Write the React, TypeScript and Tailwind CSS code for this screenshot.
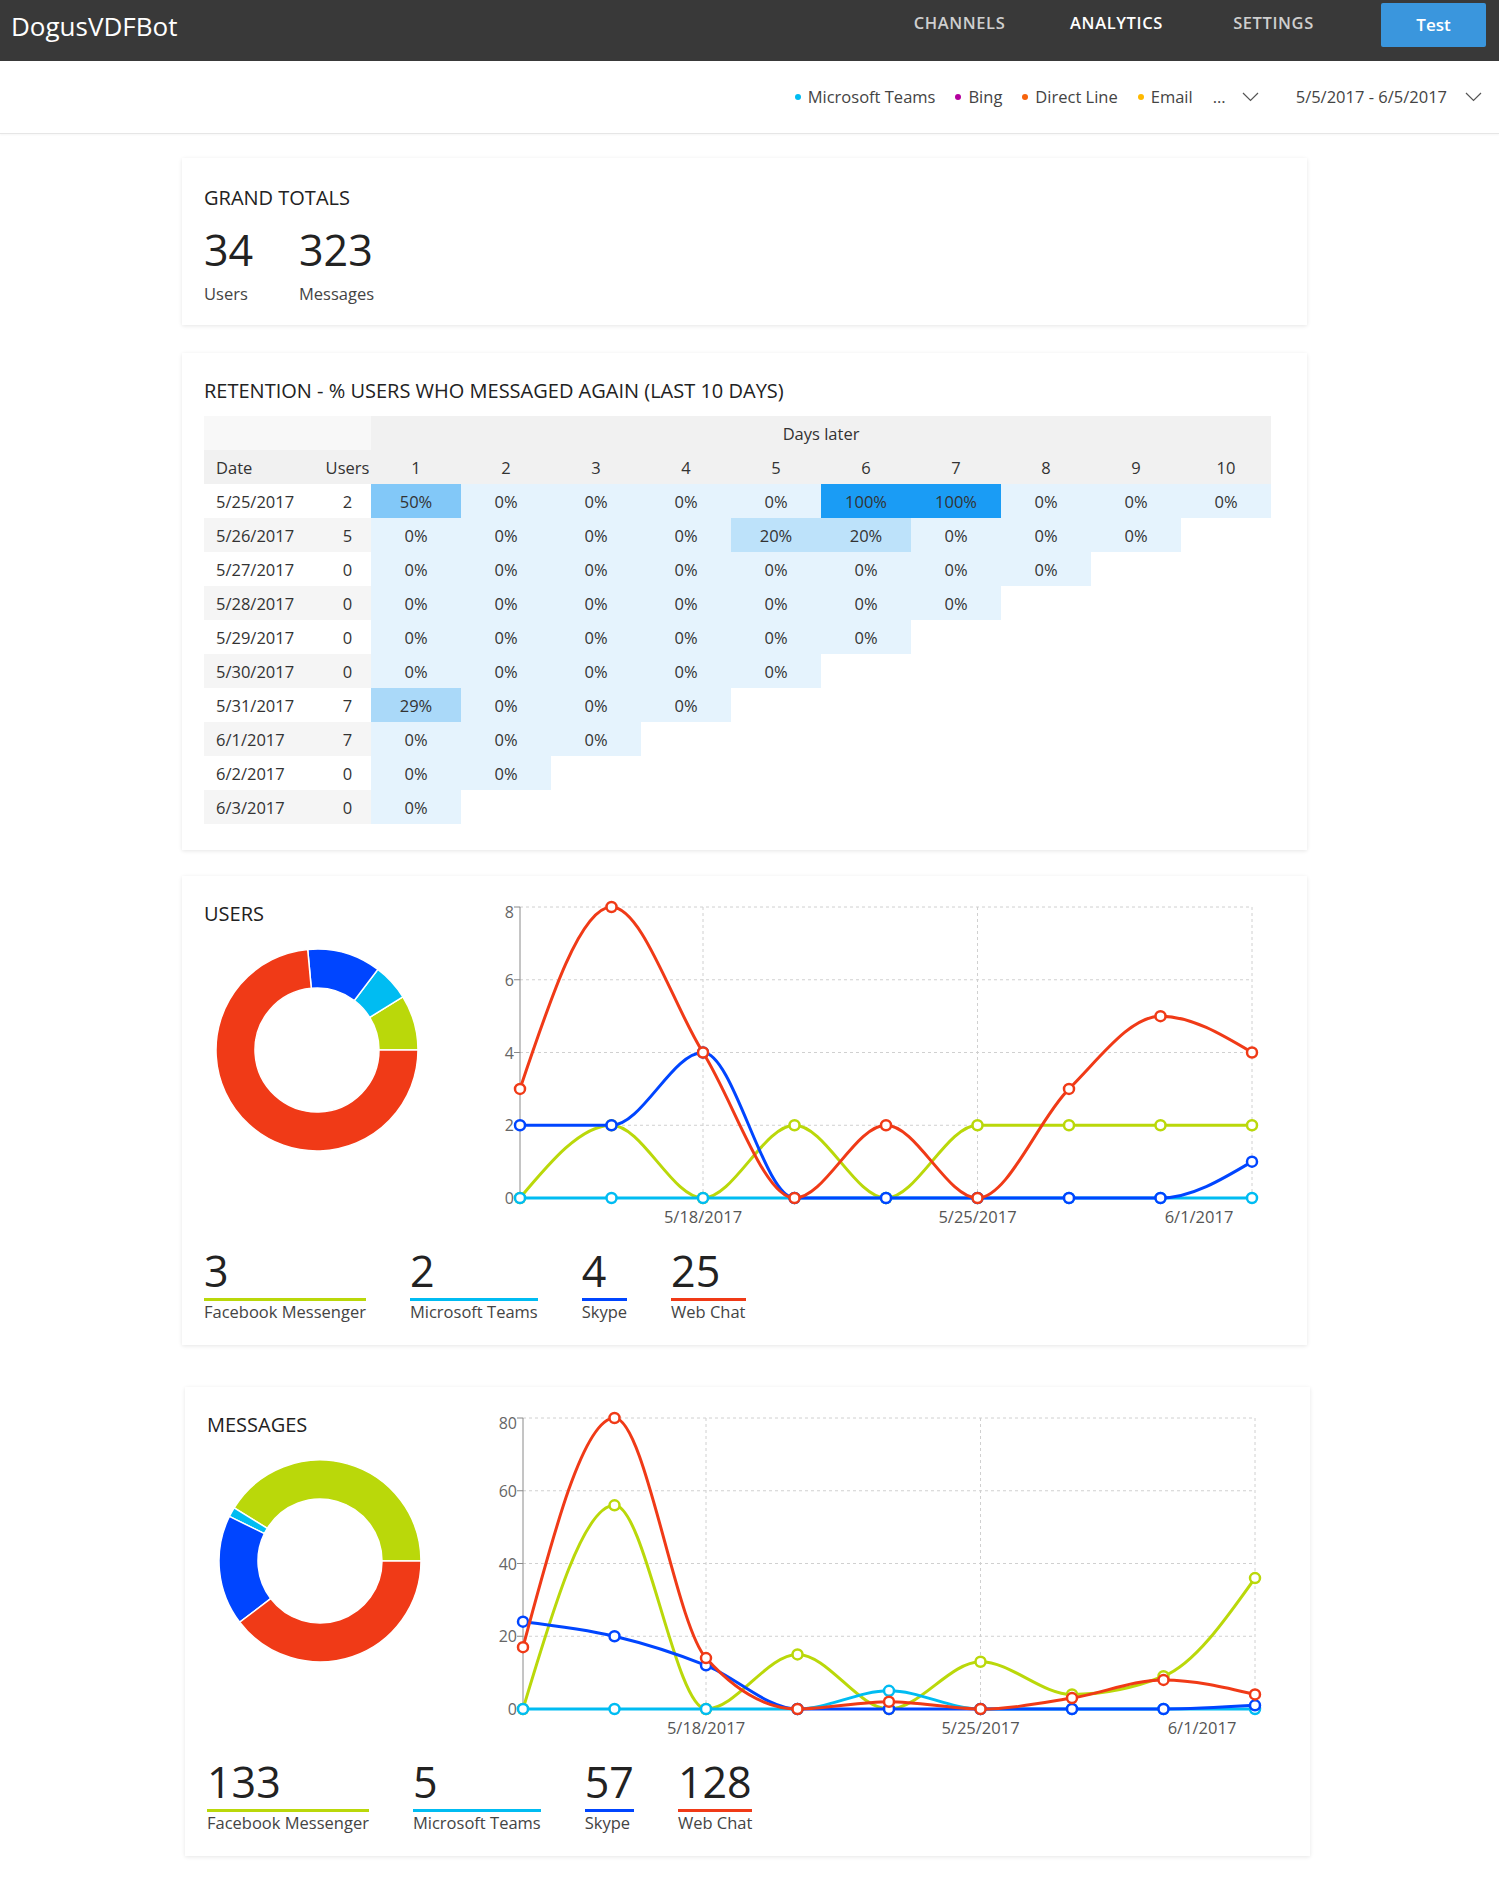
import React from "react";

const RED = "#f03a17";
const BLUE = "#0045ff";
const CYAN = "#00bcf2";
const GREEN = "#bad80a";

type Pt = [number, number];

function sgn(x: number) {
  return x < 0 ? -1 : 1;
}

function monotonePath(pts: Pt[]): string {
  const n = pts.length;
  const t: number[] = new Array(n).fill(0);
  for (let i = 1; i < n - 1; i++) {
    const [x0, y0] = pts[i - 1];
    const [x1, y1] = pts[i];
    const [x2, y2] = pts[i + 1];
    const h0 = x1 - x0;
    const h1 = x2 - x1;
    const s0 = (y1 - y0) / h0;
    const s1 = (y2 - y1) / h1;
    const p = (s0 * h1 + s1 * h0) / (h0 + h1);
    t[i] = (sgn(s0) + sgn(s1)) * Math.min(Math.abs(s0), Math.abs(s1), 0.5 * Math.abs(p)) || 0;
  }
  const h = pts[1][0] - pts[0][0];
  t[0] = (3 * (pts[1][1] - pts[0][1]) / h - t[1]) / 2;
  const h2 = pts[n - 1][0] - pts[n - 2][0];
  t[n - 1] = (3 * (pts[n - 1][1] - pts[n - 2][1]) / h2 - t[n - 2]) / 2;
  let d = `M${pts[0][0]},${pts[0][1]}`;
  for (let i = 0; i < n - 1; i++) {
    const [x0, y0] = pts[i];
    const [x1, y1] = pts[i + 1];
    const dx = (x1 - x0) / 3;
    d += `C${x0 + dx},${y0 + dx * t[i]},${x1 - dx},${y1 - dx * t[i + 1]},${x1},${y1}`;
  }
  return d;
}

type Series = { color: string; values: number[] };

function LineChart({ series, yMax, ticks }: { series: Series[]; yMax: number; ticks: number[] }) {
  const X0 = 40;
  const STEP = 91.5;
  const Y0 = 308;
  const YT = 17;
  const sx = (i: number) => X0 + i * STEP;
  const sy = (v: number) => Y0 - (v / yMax) * (Y0 - YT);
  const xEnd = sx(8);
  return (
    <svg width={800} height={345} className="block shrink-0">
      {ticks
        .filter((t) => t > 0)
        .map((t) => (
          <line key={"h" + t} x1={X0} x2={xEnd} y1={sy(t)} y2={sy(t)} stroke="#d0d0d0" strokeDasharray="3 3" />
        ))}
      {[2, 5, 8].map((i) => (
        <line key={"v" + i} x1={sx(i)} x2={sx(i)} y1={YT} y2={Y0} stroke="#d0d0d0" strokeDasharray="3 3" />
      ))}
      <line x1={X0} x2={X0} y1={YT} y2={Y0} stroke="#8a8a8a" />
      {ticks.map((t) => (
        <g key={"t" + t}>
          <line x1={X0 - 6} x2={X0} y1={sy(t)} y2={sy(t)} stroke="#8a8a8a" />
          <text
            x={X0 - 6}
            y={sy(t) + (t === yMax ? 5 : 0)}
            textAnchor="end"
            dominantBaseline="central"
            fontSize={16}
            fill="#666"
          >
            {t}
          </text>
        </g>
      ))}
      <text x={sx(2)} y={333} textAnchor="middle" fontSize={16.5} fill="#555">
        5/18/2017
      </text>
      <text x={sx(5)} y={333} textAnchor="middle" fontSize={16.5} fill="#555">
        5/25/2017
      </text>
      <text x={719} y={333} textAnchor="middle" fontSize={16.5} fill="#555">
        6/1/2017
      </text>
      {series.map((s, si) => {
        const pts: Pt[] = s.values.map((v, i) => [sx(i), sy(v)]);
        return (
          <g key={"s" + si}>
            <path d={monotonePath(pts)} fill="none" stroke={s.color} strokeWidth={3} />
            {pts.map((p, i) => (
              <circle key={i} cx={p[0]} cy={p[1]} r={5} fill="#fff" stroke={s.color} strokeWidth={2.5} />
            ))}
          </g>
        );
      })}
    </svg>
  );
}

function Donut({ values, colors }: { values: number[]; colors: string[] }) {
  const C = 102;
  const R = 101;
  const r = 62;
  const total = values.reduce((a, b) => a + b, 0);
  let a0 = 0;
  const p = (rad: number, a: number) => `${C + rad * Math.cos(a)},${C - rad * Math.sin(a)}`;
  return (
    <svg width={204} height={204} className="block">
      {values.map((v, i) => {
        const a1 = a0 + (v / total) * Math.PI * 2;
        const large = a1 - a0 > Math.PI ? 1 : 0;
        const d = `M${p(R, a0)}A${R},${R} 0 ${large} 0 ${p(R, a1)}L${p(r, a1)}A${r},${r} 0 ${large} 1 ${p(r, a0)}Z`;
        a0 = a1;
        return <path key={i} d={d} fill={colors[i]} stroke="#fff" strokeWidth={1.5} />;
      })}
    </svg>
  );
}

function Chevron() {
  return (
    <svg width={17} height={10} className="block">
      <polyline points="1,1 8.5,8.5 16,1" fill="none" stroke="#555" strokeWidth={1.2} />
    </svg>
  );
}

function BigNum({ children }: { children: React.ReactNode }) {
  return (
    <div className="pt-[1px] h-[50px] text-[43px] leading-[50px] text-[#222] whitespace-nowrap">
      {children}
    </div>
  );
}

function LegendItem({ value, label, color }: { value: string; label: string; color: string }) {
  return (
    <div className="inline-flex flex-col items-stretch mr-[44px]">
      <BigNum>{value}</BigNum>
      <div className="h-[3px] mt-[3px]" style={{ backgroundColor: color }} />
      <div className="text-[16.5px] leading-[22px] text-[#444] whitespace-nowrap">{label}</div>
    </div>
  );
}

function ChartCard({
  title,
  donut,
  series,
  yMax,
  ticks,
  legend,
  className,
}: {
  title: string;
  donut: number[];
  series: Series[];
  yMax: number;
  ticks: number[];
  legend: { value: string; label: string; color: string }[];
  className: string;
}) {
  return (
    <div className={"w-[1125px] bg-white shadow-[0_1px_4px_rgba(0,0,0,0.1)] px-[22px] pt-[14px] pb-[22px] " + className}>
      <div className="flex">
        <div className="w-[276px] shrink-0">
          <div className="mt-[11px] text-[20px] leading-[26px] text-[#222]">{title}</div>
          <div className="mt-[21px] ml-[11px]">
            <Donut values={donut} colors={[GREEN, CYAN, BLUE, RED]} />
          </div>
        </div>
        <LineChart series={series} yMax={yMax} ticks={ticks} />
      </div>
      <div className="mt-[10px] flex">
        {legend.map((l) => (
          <LegendItem key={l.label} {...l} />
        ))}
      </div>
    </div>
  );
}

const rows: [string, number, string[]][] = [
  ["5/25/2017", 2, ["50%", "0%", "0%", "0%", "0%", "100%", "100%", "0%", "0%", "0%"]],
  ["5/26/2017", 5, ["0%", "0%", "0%", "0%", "20%", "20%", "0%", "0%", "0%"]],
  ["5/27/2017", 0, ["0%", "0%", "0%", "0%", "0%", "0%", "0%", "0%"]],
  ["5/28/2017", 0, ["0%", "0%", "0%", "0%", "0%", "0%", "0%"]],
  ["5/29/2017", 0, ["0%", "0%", "0%", "0%", "0%", "0%"]],
  ["5/30/2017", 0, ["0%", "0%", "0%", "0%", "0%"]],
  ["5/31/2017", 7, ["29%", "0%", "0%", "0%"]],
  ["6/1/2017", 7, ["0%", "0%", "0%"]],
  ["6/2/2017", 0, ["0%", "0%"]],
  ["6/3/2017", 0, ["0%"]],
];

function cellBg(v: string) {
  switch (v) {
    case "100%":
      return "bg-[#1a9cf5]";
    case "50%":
      return "bg-[#82c8f8]";
    case "29%":
      return "bg-[#aad9f9]";
    case "20%":
      return "bg-[#bde2fa]";
    default:
      return "bg-[#e5f3fd]";
  }
}

export default function App() {
  return (
    <div className="min-h-[1903px] bg-white text-[#333] font-['Open_Sans',sans-serif]">
      {/* Top bar */}
      <header className="h-[61px] bg-[#393939] flex items-start">
        <div className="pl-[11px] pt-[9px] text-[26px] leading-[34px] text-white">DogusVDFBot</div>
        <nav className="ml-auto flex items-start">
          <div className="w-[157px] text-center pt-[12px] text-[16.5px] leading-[22px] font-semibold tracking-[0.6px] text-[#cfcfcf]">
            CHANNELS
          </div>
          <div className="w-[157px] text-center pt-[12px] text-[16.5px] leading-[22px] font-semibold tracking-[0.6px] text-white">
            ANALYTICS
          </div>
          <div className="w-[157px] text-center pt-[12px] text-[16.5px] leading-[22px] font-semibold tracking-[0.6px] text-[#cfcfcf]">
            SETTINGS
          </div>
          <div className="ml-[29px] mr-[13px] mt-[3px] w-[105px] h-[44px] rounded-[2px] bg-[#3a96dd] flex items-center justify-center text-white text-[17px] font-semibold">
            Test
          </div>
        </nav>
      </header>

      {/* Filter bar */}
      <div className="h-[73px] border-b border-[#e6e6e6] shadow-[0_1px_2px_rgba(0,0,0,0.04)] flex items-center justify-end pr-[17px] text-[16.5px] text-[#444]">
        <div className="flex items-center">
          <span className="w-[6px] h-[6px] rounded-full bg-[#00bcf2] mr-[7px]" />
          <span>Microsoft Teams</span>
        </div>
        <div className="flex items-center ml-[20px]">
          <span className="w-[6px] h-[6px] rounded-full bg-[#b4009e] mr-[7px]" />
          <span>Bing</span>
        </div>
        <div className="flex items-center ml-[20px]">
          <span className="w-[6px] h-[6px] rounded-full bg-[#f7630c] mr-[7px]" />
          <span>Direct Line</span>
        </div>
        <div className="flex items-center ml-[20px]">
          <span className="w-[6px] h-[6px] rounded-full bg-[#ffb900] mr-[7px]" />
          <span>Email</span>
        </div>
        <span className="ml-[20px]">...</span>
        <div className="ml-[16px]">
          <Chevron />
        </div>
        <span className="ml-[37px]">5/5/2017 - 6/5/2017</span>
        <div className="ml-[18px]">
          <Chevron />
        </div>
      </div>

      {/* Grand totals */}
      <div className="ml-[182px] mt-[24px] w-[1125px] bg-white shadow-[0_1px_4px_rgba(0,0,0,0.1)] px-[22px] pt-[27px] pb-[20px]">
        <div className="text-[20px] leading-[26px] text-[#222]">GRAND TOTALS</div>
        <div className="mt-[13px] flex">
          <div className="w-[95px]">
            <BigNum>34</BigNum>
            <div className="mt-[9px] text-[16.5px] leading-[22px] text-[#444]">Users</div>
          </div>
          <div>
            <BigNum>323</BigNum>
            <div className="mt-[9px] text-[16.5px] leading-[22px] text-[#444]">Messages</div>
          </div>
        </div>
      </div>

      {/* Retention */}
      <div className="ml-[182px] mt-[28px] w-[1125px] bg-white shadow-[0_1px_4px_rgba(0,0,0,0.1)] px-[22px] pt-[25px] pb-[26px]">
        <div className="text-[20px] leading-[26px] text-[#222]">RETENTION - % USERS WHO MESSAGED AGAIN (LAST 10 DAYS)</div>
        <table className="mt-[12px] table-fixed border-collapse w-[1067px] text-[16.5px] text-[#333]">
          <colgroup>
            <col className="w-[120px]" />
            <col className="w-[47px]" />
            {Array.from({ length: 10 }).map((_, i) => (
              <col key={i} className="w-[90px]" />
            ))}
          </colgroup>
          <thead>
            <tr className="h-[34px]">
              <th colSpan={2} className="bg-[#f8f8f8] p-0" />
              <th colSpan={10} className="bg-[#f1f1f1] p-0 pt-[2px] font-normal text-center">
                Days later
              </th>
            </tr>
            <tr className="h-[34px] bg-[#f1f1f1]">
              <th className="p-0 pt-[2px] pl-[12px] text-left font-normal">Date</th>
              <th className="p-0 pt-[2px] text-center font-normal">Users</th>
              {Array.from({ length: 10 }).map((_, i) => (
                <th key={i} className="p-0 pt-[2px] text-center font-normal">
                  {i + 1}
                </th>
              ))}
            </tr>
          </thead>
          <tbody>
            {rows.map(([date, users, vals], ri) => (
              <tr key={date} className="h-[34px]">
                <td className={"p-0 pt-[2px] pl-[12px] " + (ri % 2 === 1 ? "bg-[#f5f5f5]" : "bg-white")}>{date}</td>
                <td className={"p-0 pt-[2px] text-center " + (ri % 2 === 1 ? "bg-[#f5f5f5]" : "bg-white")}>{users}</td>
                {Array.from({ length: 10 }).map((_, ci) => {
                  const v = vals[ci];
                  return (
                    <td key={ci} className={"p-0 pt-[2px] text-center " + (v ? cellBg(v) : "")}>
                      {v ?? ""}
                    </td>
                  );
                })}
              </tr>
            ))}
          </tbody>
        </table>
      </div>

      {/* Users */}
      <ChartCard
        className="ml-[182px] mt-[26px]"
        title="USERS"
        donut={[3, 2, 4, 25]}
        yMax={8}
        ticks={[0, 2, 4, 6, 8]}
        series={[
          { color: GREEN, values: [0, 2, 0, 2, 0, 2, 2, 2, 2] },
          { color: CYAN, values: [0, 0, 0, 0, 0, 0, 0, 0, 0] },
          { color: BLUE, values: [2, 2, 4, 0, 0, 0, 0, 0, 1] },
          { color: RED, values: [3, 8, 4, 0, 2, 0, 3, 5, 4] },
        ]}
        legend={[
          { value: "3", label: "Facebook Messenger", color: GREEN },
          { value: "2", label: "Microsoft Teams", color: CYAN },
          { value: "4", label: "Skype", color: BLUE },
          { value: "25", label: "Web Chat", color: RED },
        ]}
      />

      {/* Messages */}
      <ChartCard
        className="ml-[185px] mt-[42px]"
        title="MESSAGES"
        donut={[133, 5, 57, 128]}
        yMax={80}
        ticks={[0, 20, 40, 60, 80]}
        series={[
          { color: GREEN, values: [0, 56, 0, 15, 0, 13, 4, 9, 36] },
          { color: CYAN, values: [0, 0, 0, 0, 5, 0, 0, 0, 0] },
          { color: BLUE, values: [24, 20, 12, 0, 0, 0, 0, 0, 1] },
          { color: RED, values: [17, 80, 14, 0, 2, 0, 3, 8, 4] },
        ]}
        legend={[
          { value: "133", label: "Facebook Messenger", color: GREEN },
          { value: "5", label: "Microsoft Teams", color: CYAN },
          { value: "57", label: "Skype", color: BLUE },
          { value: "128", label: "Web Chat", color: RED },
        ]}
      />
    </div>
  );
}
